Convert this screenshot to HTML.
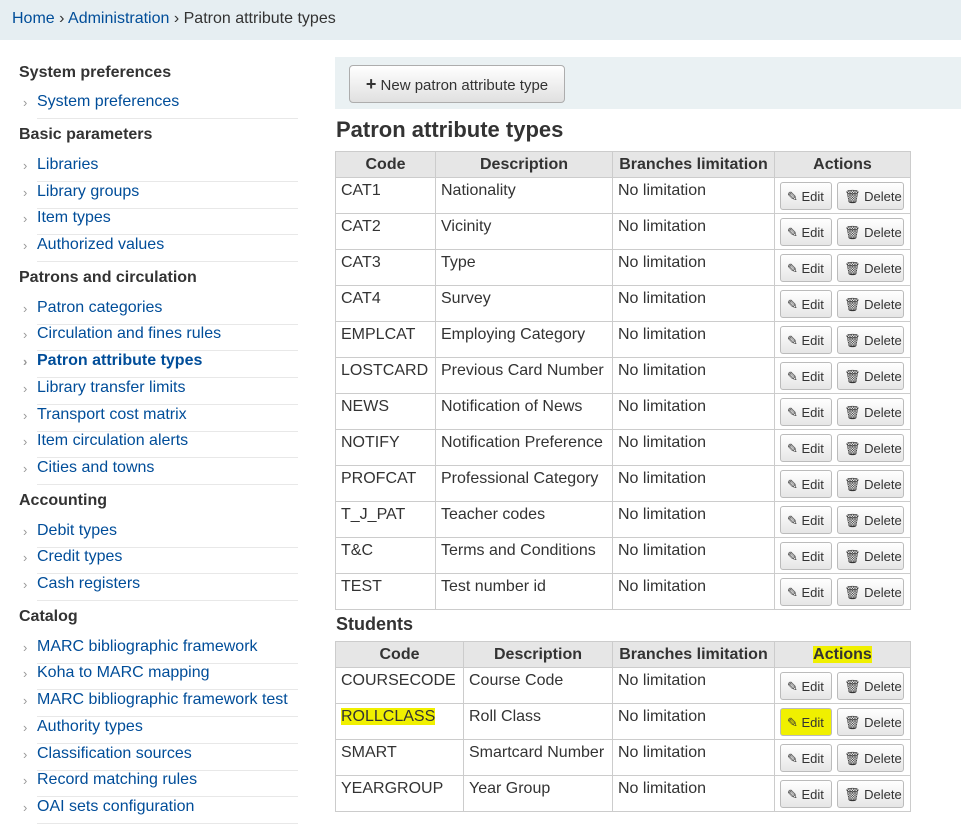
<!DOCTYPE html>
<html><head><meta charset="utf-8"><style>
body{margin:0;width:961px;height:822px;overflow:hidden;background:#fff;font-family:"Liberation Sans",Arial,sans-serif;font-size:16px;color:#333;position:relative}
.bc{position:absolute;left:0;top:0;width:961px;height:40px;background:#e6eef2;}
.bc span{position:absolute;left:12px;top:9px;line-height:20px}
a{color:#004d99;text-decoration:none}
.h{position:absolute;left:19px;font-weight:bold;line-height:20px}
.i{position:absolute;left:37px;width:261px;line-height:20px;color:#004d99;border-bottom:1px solid #e8e8e8;padding-bottom:6px}
.i:before{content:"›";position:absolute;left:-14px;color:#999;font-size:13px;top:1px}
.tb{position:absolute;left:335px;top:57px;width:626px;height:52px;background:#eaf1f3}
.nb{position:absolute;left:349px;top:65px;width:214px;height:36px;border:1px solid #adadad;border-radius:4px;background:linear-gradient(#fff,#e0e0e0);font-size:15px;line-height:36px;text-align:center;color:#333}
h1{position:absolute;left:336px;top:117px;margin:0;font-size:22px;line-height:26px}
h2{position:absolute;left:336px;top:613px;margin:0;font-size:18px;line-height:22px}
table{position:absolute;left:335px;border-collapse:collapse;width:575px;table-layout:fixed}
td,th{border:1px solid #ccc;padding:0 5px;vertical-align:top;line-height:20px;overflow:hidden;white-space:nowrap}
th{background:#e6e6e6;height:25px;line-height:25px;text-align:center;padding:0}
td{padding:0 5px}
td .c{height:35px;padding-top:3px;box-sizing:border-box}
td.a{padding:0 0 0 5px}
td.a .c{padding-top:4px;font-size:0;line-height:0}
.b{display:inline-block;height:28px;line-height:28px;border:1px solid #bbb;border-radius:3px;background:linear-gradient(#fff,#e6e6e6);font-size:13px;padding:0 0 0 6px;vertical-align:top;box-sizing:border-box;overflow:hidden}
.e{width:52px}.d{width:67px;margin-left:5px}
.hl{background:#f0f000}
</style></head><body>
<div class="bc"><span><a>Home</a> › <a>Administration</a> › Patron attribute types</span></div>

<div class="h" style="top:63px">System preferences</div>
<div class="i" style="top:92px">System preferences</div>
<div class="h" style="top:125px">Basic parameters</div>
<div class="i" style="top:155px">Libraries</div>
<div class="i" style="top:182px">Library groups</div>
<div class="i" style="top:208px">Item types</div>
<div class="i" style="top:235px">Authorized values</div>
<div class="h" style="top:268px">Patrons and circulation</div>
<div class="i" style="top:298px">Patron categories</div>
<div class="i" style="top:324px">Circulation and fines rules</div>
<div class="i" style="top:351px;font-weight:bold">Patron attribute types</div>
<div class="i" style="top:378px">Library transfer limits</div>
<div class="i" style="top:405px">Transport cost matrix</div>
<div class="i" style="top:431px">Item circulation alerts</div>
<div class="i" style="top:458px">Cities and towns</div>
<div class="h" style="top:491px">Accounting</div>
<div class="i" style="top:521px">Debit types</div>
<div class="i" style="top:547px">Credit types</div>
<div class="i" style="top:574px">Cash registers</div>
<div class="h" style="top:607px">Catalog</div>
<div class="i" style="top:637px">MARC bibliographic framework</div>
<div class="i" style="top:663px">Koha to MARC mapping</div>
<div class="i" style="top:690px">MARC bibliographic framework test</div>
<div class="i" style="top:717px">Authority types</div>
<div class="i" style="top:744px">Classification sources</div>
<div class="i" style="top:770px">Record matching rules</div>
<div class="i" style="top:797px">OAI sets configuration</div>

<div class="tb"></div>
<div class="nb"><b style="font-size:18px">+</b> New patron attribute type</div>
<h1>Patron attribute types</h1>

<table style="top:151px">
<colgroup><col style="width:100px"><col style="width:177px"><col style="width:162px"><col style="width:136px"></colgroup>
<tr><th>Code</th><th>Description</th><th>Branches limitation</th><th>Actions</th></tr>
<tr><td><div class="c">CAT1</div></td><td><div class="c">Nationality</div></td><td><div class="c">No limitation</div></td><td class="a"><div class="c"><span class="b e">✎ Edit</span><span class="b d">🗑 Delete</span></div></td></tr>
<tr><td><div class="c">CAT2</div></td><td><div class="c">Vicinity</div></td><td><div class="c">No limitation</div></td><td class="a"><div class="c"><span class="b e">✎ Edit</span><span class="b d">🗑 Delete</span></div></td></tr>
<tr><td><div class="c">CAT3</div></td><td><div class="c">Type</div></td><td><div class="c">No limitation</div></td><td class="a"><div class="c"><span class="b e">✎ Edit</span><span class="b d">🗑 Delete</span></div></td></tr>
<tr><td><div class="c">CAT4</div></td><td><div class="c">Survey</div></td><td><div class="c">No limitation</div></td><td class="a"><div class="c"><span class="b e">✎ Edit</span><span class="b d">🗑 Delete</span></div></td></tr>
<tr><td><div class="c">EMPLCAT</div></td><td><div class="c">Employing Category</div></td><td><div class="c">No limitation</div></td><td class="a"><div class="c"><span class="b e">✎ Edit</span><span class="b d">🗑 Delete</span></div></td></tr>
<tr><td><div class="c">LOSTCARD</div></td><td><div class="c">Previous Card Number</div></td><td><div class="c">No limitation</div></td><td class="a"><div class="c"><span class="b e">✎ Edit</span><span class="b d">🗑 Delete</span></div></td></tr>
<tr><td><div class="c">NEWS</div></td><td><div class="c">Notification of News</div></td><td><div class="c">No limitation</div></td><td class="a"><div class="c"><span class="b e">✎ Edit</span><span class="b d">🗑 Delete</span></div></td></tr>
<tr><td><div class="c">NOTIFY</div></td><td><div class="c">Notification Preference</div></td><td><div class="c">No limitation</div></td><td class="a"><div class="c"><span class="b e">✎ Edit</span><span class="b d">🗑 Delete</span></div></td></tr>
<tr><td><div class="c">PROFCAT</div></td><td><div class="c">Professional Category</div></td><td><div class="c">No limitation</div></td><td class="a"><div class="c"><span class="b e">✎ Edit</span><span class="b d">🗑 Delete</span></div></td></tr>
<tr><td><div class="c">T_J_PAT</div></td><td><div class="c">Teacher codes</div></td><td><div class="c">No limitation</div></td><td class="a"><div class="c"><span class="b e">✎ Edit</span><span class="b d">🗑 Delete</span></div></td></tr>
<tr><td><div class="c">T&amp;C</div></td><td><div class="c">Terms and Conditions</div></td><td><div class="c">No limitation</div></td><td class="a"><div class="c"><span class="b e">✎ Edit</span><span class="b d">🗑 Delete</span></div></td></tr>
<tr><td><div class="c">TEST</div></td><td><div class="c">Test number id</div></td><td><div class="c">No limitation</div></td><td class="a"><div class="c"><span class="b e">✎ Edit</span><span class="b d">🗑 Delete</span></div></td></tr>
</table>

<h2>Students</h2>
<table style="top:641px">
<colgroup><col style="width:128px"><col style="width:149px"><col style="width:162px"><col style="width:136px"></colgroup>
<tr><th>Code</th><th>Description</th><th>Branches limitation</th><th><span class="hl">Actions</span></th></tr>
<tr><td><div class="c">COURSECODE</div></td><td><div class="c">Course Code</div></td><td><div class="c">No limitation</div></td><td class="a"><div class="c"><span class="b e">✎ Edit</span><span class="b d">🗑 Delete</span></div></td></tr>
<tr><td><div class="c"><span class="hl">ROLLCLASS</span></div></td><td><div class="c">Roll Class</div></td><td><div class="c">No limitation</div></td><td class="a"><div class="c"><span class="b e" style="background:#f0f000">✎ Edit</span><span class="b d">🗑 Delete</span></div></td></tr>
<tr><td><div class="c">SMART</div></td><td><div class="c">Smartcard Number</div></td><td><div class="c">No limitation</div></td><td class="a"><div class="c"><span class="b e">✎ Edit</span><span class="b d">🗑 Delete</span></div></td></tr>
<tr><td><div class="c">YEARGROUP</div></td><td><div class="c">Year Group</div></td><td><div class="c">No limitation</div></td><td class="a"><div class="c"><span class="b e">✎ Edit</span><span class="b d">🗑 Delete</span></div></td></tr>
</table>
</body></html>
